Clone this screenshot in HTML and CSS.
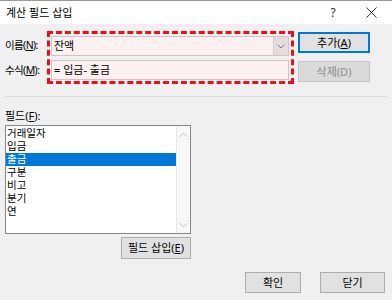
FILE: index.html
```html
<!DOCTYPE html>
<html lang="ko">
<head>
  <meta charset="UTF-8">
  <title>계산 필드 삽입</title>
  <link rel="stylesheet" href="styles.css">
</head>
<body>
  <div class="window">
    <div class="titlebar">
      <span class="title">계산 필드 삽입</span>
      <span class="help">?</span>
      <span class="close">
        <svg width="11" height="11" viewBox="0 0 11 11"><path d="M0.5 0.5 L10.5 10.5 M10.5 0.5 L0.5 10.5" stroke="#333" stroke-width="1" fill="none"/></svg>
      </span>
    </div>
    <div class="top">
      <div class="labels">
        <div class="label">이름(<u>N</u>):</div>
        <div class="label">수식(<u>M</u>):</div>
      </div>
      <div class="highlight">
        <div class="combo">
          <span class="combo-text">잔액</span>
          <span class="drop">
            <svg width="8" height="5" viewBox="0 0 8 5"><path d="M0.5 0.5 L4 4 L7.5 0.5" stroke="#777" stroke-width="1" fill="none"/></svg>
          </span>
        </div>
        <div class="formula">= 입금- 출금</div>
      </div>
      <div class="side">
        <button class="btn default">추가(<u>A</u>)</button>
        <button class="btn disabled">삭제(D)</button>
      </div>
    </div>
    <div class="sep"></div>
    <div class="fields-label">필드(<u>F</u>):</div>
    <div class="listbox">
      <ul class="items">
        <li>거래일자</li>
        <li>입금</li>
        <li class="selected">출금</li>
        <li>구분</li>
        <li>비고</li>
        <li>분기</li>
        <li>연</li>
      </ul>
      <div class="scroll">
        <svg width="9" height="6" viewBox="0 0 9 6"><path d="M0.5 5 L4.5 1 L8.5 5" stroke="#c2c2c2" stroke-width="1" fill="none"/></svg>
        <svg width="9" height="6" viewBox="0 0 9 6"><path d="M0.5 1 L4.5 5 L8.5 1" stroke="#c2c2c2" stroke-width="1" fill="none"/></svg>
      </div>
    </div>
    <div class="insert-row">
      <button class="btn insert">필드 삽입(<u>E</u>)</button>
    </div>
    <div class="footer">
      <button class="btn ok">확인</button>
      <button class="btn cancel">닫기</button>
    </div>
  </div>
</body>
</html>
```

FILE: styles.css
```css
* {
  margin: 0;
  padding: 0;
  box-sizing: border-box;
}
body {
  font-family: "Noto Sans", "Noto Sans CJK KR", sans-serif;
  font-size: 11px;
  color: #000;
  background: #f0f0f0;
  width: 392px;
  height: 300px;
  overflow: hidden;
}
u { text-decoration: underline; text-underline-offset: 1px; }
.window {
  border-top: 1px solid #9a9a9a;
  height: 300px;
}
.titlebar {
  height: 23px;
  background: #fff;
  display: flex;
  align-items: center;
  padding-left: 6px;
}
.title {
  flex: 1;
  line-height: 16px;
}
.help {
  width: 14px;
  text-align: center;
  margin-right: 26px;
  color: #333;
  font-size: 12px;
}
.close {
  display: flex;
  margin-right: 15px;
}
.top {
  display: flex;
  align-items: flex-start;
  padding: 7px 0 0 5px;
}
.labels {
  width: 42px;
  padding-top: 4px;
  display: flex;
  flex-direction: column;
  gap: 5px;
}
.label {
  line-height: 20px;
  white-space: nowrap;
  font-size: 10.5px;
  letter-spacing: -0.6px;
}
.highlight {
  width: 247px;
  height: 53px;
  border: 3px dashed #e8101a;
  padding: 2px 2px 0 1px;
  display: flex;
  flex-direction: column;
  gap: 4px;
}
.combo, .formula {
  height: 20px;
  background: #fdf0f0;
  border: 1px solid #cfc3c3;
  display: flex;
  align-items: center;
}
.combo-text, .formula {
  line-height: 18px;
  padding-left: 2px;
}
.combo-text { flex: 1; }
.drop {
  width: 15px;
  height: 18px;
  background: #e6dcdc;
  border-left: 1px solid #d6caca;
  display: flex;
  align-items: center;
  justify-content: center;
}
.side {
  margin-left: 4px;
  width: 72px;
  display: flex;
  flex-direction: column;
}
.btn {
  font-family: inherit;
  font-size: 11px;
  color: #000;
  background: #e1e1e1;
  border: 1px solid #adadad;
  height: 21px;
  line-height: 18px;
}
.btn.default {
  margin-top: 1px;
  border-color: #0078d7;
  box-shadow: inset 0 0 0 1px #0078d7;
}
.btn.disabled {
  margin-top: 8px;
  background: #dadada;
  border-color: #c4c4c4;
  color: #8a8a8a;
}
.sep {
  height: 1px;
  background: #dcdcdc;
  margin: 12px 5px 0;
}
.fields-label {
  line-height: 16px;
  margin: 11px 0 0 5px;
}
.listbox {
  margin: 1px 0 0 5px;
  width: 186px;
  height: 109px;
  border: 1px solid #828790;
  background: #fff;
  display: flex;
}
.items {
  list-style: none;
  flex: 1;
  padding-top: 1px;
}
.items li {
  height: 13px;
  line-height: 13px;
  padding-left: 1px;
  font-size: 10.5px;
}
.items li.selected {
  background: #0078d7;
  color: #fff;
}
.scroll {
  width: 14px;
  background: #f7f7f7;
  border-left: 1px solid #e6e6e6;
  display: flex;
  flex-direction: column;
  justify-content: space-between;
  align-items: center;
  padding: 6px 0 5px;
}
.insert-row {
  width: 191px;
  display: flex;
  justify-content: flex-end;
  margin-top: 3px;
}
.btn.insert {
  width: 70px;
  height: 22px;
}
.footer {
  display: flex;
  justify-content: flex-end;
  gap: 19px;
  margin-top: 13px;
  padding-right: 7px;
}
.btn.ok { width: 56px; }
.btn.cancel { width: 65px; }
```
